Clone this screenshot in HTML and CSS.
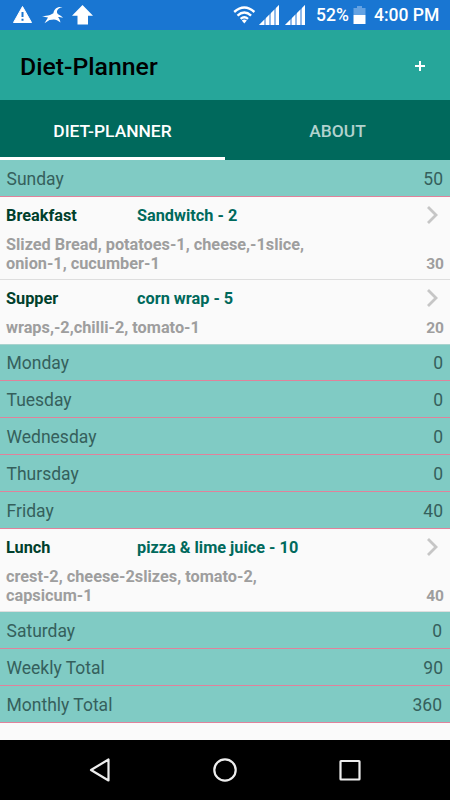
FILE: index.html
```html
<!DOCTYPE html>
<html lang="en">

<head>
    <meta charset="UTF-8">
    <meta name="viewport" content="width=device-width, initial-scale=1.0">
    <title>Diet-Planner</title>
    <link rel="stylesheet" href="styles.css">
</head>

<body>

    <div class="status-bar">
        <svg class="notices" width="94" height="30" viewBox="0 0 94 30">
            <path d="M22.5 6.5L31.5 22.5H13.5Z" fill="#fff" stroke="#fff" stroke-linejoin="round"/>
            <path d="M22.5 12v5M22.5 18.7v2" stroke="#1976d2" stroke-width="2"/>
            <path d="M62.5 7.2C57.5 6 54 9 53.4 13.2L50 15C47.5 15.8 44.5 16 42 16.5C44.2 16.8 46 17.4 48 17.5L44.5 23.3L49.5 20C53 19.3 55 19 57 20.2L60.5 22.5C59.6 19 58.8 17.8 58 17C59.5 17 61.5 17.2 63 17.8C61.5 15.5 59 15 57.8 14C55.8 11.5 57.5 7.8 62.5 7.2Z" fill="#fff"/>
            <path d="M82.5 5L93 15.8H88V24.5H77.5V15.8H72Z" fill="#fff"/>
        </svg>
        <svg class="signals" width="74" height="30" viewBox="0 0 74 30">
            <g fill="none" stroke="#fff" stroke-width="2.4">
                <path d="M1.2 12Q11.3 3 21.4 12"/>
                <path d="M4.5 15.6Q11.3 9.6 18.1 15.6"/>
                <path d="M7.6 18.9Q11.3 15.8 15 18.9"/>
            </g>
            <path d="M8.8 20.5Q11.3 18.6 13.8 20.5L11.3 23.5Z" fill="#fff"/>
            <g id="bars">
                <path d="M26 25L46 5V25Z" fill="#8fb9ea"/>
                <path d="M26 25L31 20V25ZM33 18L36 15V25H33ZM38 13L41 10V25H38ZM43 8L46 5V25H43Z" fill="#fff"/>
            </g>
            <use href="#bars" x="26"/>
        </svg>
        <span class="percent">52%</span>
        <svg class="battery" width="13" height="30" viewBox="0 0 13 30">
            <path d="M4 6H9V8H12.5V15H.5V8H4Z" fill="#64a2e2"/>
            <path d="M.5 15h12v9H.5Z" fill="#fff"/>
        </svg>
        <span class="time">4:00 PM</span>
    </div>

    <div class="app-bar">
        <h1>Diet-Planner</h1>
        <svg width="10" height="10" viewBox="0 0 10 10">
            <path d="M0 5H10M5 0V10" stroke="#fff" stroke-width="2"/>
        </svg>
    </div>

    <div class="tabs">
        <div class="tab active">DIET-PLANNER</div>
        <div class="tab">ABOUT</div>
    </div>

    <div class="list">
        <div class="day"><span>Sunday</span><span>50</span></div>

        <div class="meal">
            <div class="meal-head">
                <span class="meal-type">Breakfast</span>
                <span class="meal-name">Sandwitch - 2</span>
                <svg class="chevron" width="14" height="20" viewBox="0 0 14 20"><path d="M2 2L10 10L2 18"/></svg>
            </div>
            <div class="meal-body">
                <p>Slized Bread, potatoes-1, cheese,-1slice,<br>onion-1, cucumber-1</p>
                <span class="cost">30</span>
            </div>
        </div>

        <div class="meal short">
            <div class="meal-head">
                <span class="meal-type">Supper</span>
                <span class="meal-name">corn wrap - 5</span>
                <svg class="chevron" width="14" height="20" viewBox="0 0 14 20"><path d="M2 2L10 10L2 18"/></svg>
            </div>
            <div class="meal-body">
                <p>wraps,-2,chilli-2, tomato-1</p>
                <span class="cost">20</span>
            </div>
        </div>

        <div class="day after-short"><span>Monday</span><span>0</span></div>
        <div class="day"><span>Tuesday</span><span>0</span></div>
        <div class="day"><span>Wednesday</span><span>0</span></div>
        <div class="day"><span>Thursday</span><span>0</span></div>
        <div class="day"><span>Friday</span><span>40</span></div>

        <div class="meal">
            <div class="meal-head">
                <span class="meal-type">Lunch</span>
                <span class="meal-name">pizza &amp; lime juice - 10</span>
                <svg class="chevron" width="14" height="20" viewBox="0 0 14 20"><path d="M2 2L10 10L2 18"/></svg>
            </div>
            <div class="meal-body">
                <p>crest-2, cheese-2slizes, tomato-2,<br>capsicum-1</p>
                <span class="cost">40</span>
            </div>
        </div>

        <div class="day total"><span>Saturday</span><span>0</span></div>
        <div class="day"><span>Weekly Total</span><span>90</span></div>
        <div class="day total"><span>Monthly Total</span><span>360</span></div>
    </div>

    <div class="nav-bar">
        <svg width="24" height="26" viewBox="0 0 24 26"><path d="M3 13L20.5 2.5V23.5Z"/></svg>
        <svg width="26" height="26" viewBox="0 0 26 26"><circle cx="13" cy="13" r="10.7"/></svg>
        <svg width="24" height="26" viewBox="0 0 24 26"><rect x="2.5" y="4" width="19" height="18.5" rx=".5"/></svg>
    </div>

</body>

</html>
```
FILE: styles.css
```css
* {
    box-sizing: border-box;
}

body {
    display: flex;
    flex-direction: column;
    height: 800px;
    margin: 0;
    overflow: hidden;
    background-color: #fafafa;
    font-family: Roboto, sans-serif;
}

svg {
    display: block;
    flex-shrink: 0;
}

.status-bar {
    display: flex;
    align-items: center;
    height: 30px;
    flex-shrink: 0;
    background-color: #1976d2;
    color: #fff;
    font-size: 17.5px;
    font-weight: 500;
    line-height: 32px;
    white-space: nowrap;
}

.signals {
    margin-left: 139px;
    margin-right: 9px;
    width: 74px;
    overflow: visible;
}

.percent {
    width: 37px;
}

.time {
    margin-left: 8px;
}

.app-bar {
    display: flex;
    align-items: center;
    justify-content: space-between;
    height: 70px;
    flex-shrink: 0;
    padding: 3px 25px 0 20px;
    background-color: #26a69a;
}

.app-bar h1 {
    margin: 0;
    font-size: 24.8px;
    font-weight: 500;
    color: #000;
}

.app-bar svg {
    margin-bottom: 1px;
}

.tabs {
    display: flex;
    height: 60px;
    flex-shrink: 0;
    background-color: #00695c;
}

.tab {
    flex: 1;
    padding-top: 1px;
    border-bottom: 3px solid transparent;
    color: #b2d2ce;
    font-size: 17.4px;
    font-weight: 500;
    line-height: 60px;
    text-align: center;
}

.tab.active {
    border-bottom-color: #fff;
    color: #fff;
}

.list {
    flex: 1;
}

.day {
    display: flex;
    justify-content: space-between;
    height: 37px;
    padding: 1px 7px 0 6.5px;
    border-bottom: 1px solid #e0829b;
    background-color: #80cbc4;
    color: #35605c;
    font-size: 17.5px;
    line-height: 37px;
}

.day.after-short {
    height: 36px;
    padding-top: 0;
}

.day.total {
    padding-right: 8px;
}

.meal {
    height: 83px;
    border-bottom: 1px solid #dedede;
    font-size: 16.3px;
    font-weight: 700;
}

.meal.short {
    height: 65px;
    border-bottom-color: #a9d3ce;
}

.meal-head {
    display: flex;
    align-items: center;
    height: 37px;
    padding: 0 10px 0 6px;
}

.meal-type {
    width: 131px;
    color: #00402c;
}

.meal-name {
    flex: 1;
    color: #00695c;
}

.chevron {
    margin-bottom: 2px;
}

.chevron path {
    fill: none;
    stroke: #c6c6c6;
    stroke-width: 2.8;
}

.meal-body {
    display: flex;
    justify-content: space-between;
    align-items: flex-end;
    padding: 1px 6px 0 6px;
    color: #9e9e9e;
    line-height: 19px;
}

.meal-body p {
    margin: 0;
}

.cost {
    padding-top: 1px;
    margin-bottom: -1px;
    font-size: 15.5px;
}

.nav-bar {
    display: flex;
    align-items: center;
    justify-content: center;
    gap: 100px;
    height: 60px;
    flex-shrink: 0;
    background-color: #000;
}

.nav-bar svg {
    fill: none;
    stroke: #eee;
    stroke-width: 2.2;
    stroke-linejoin: round;
}
```
